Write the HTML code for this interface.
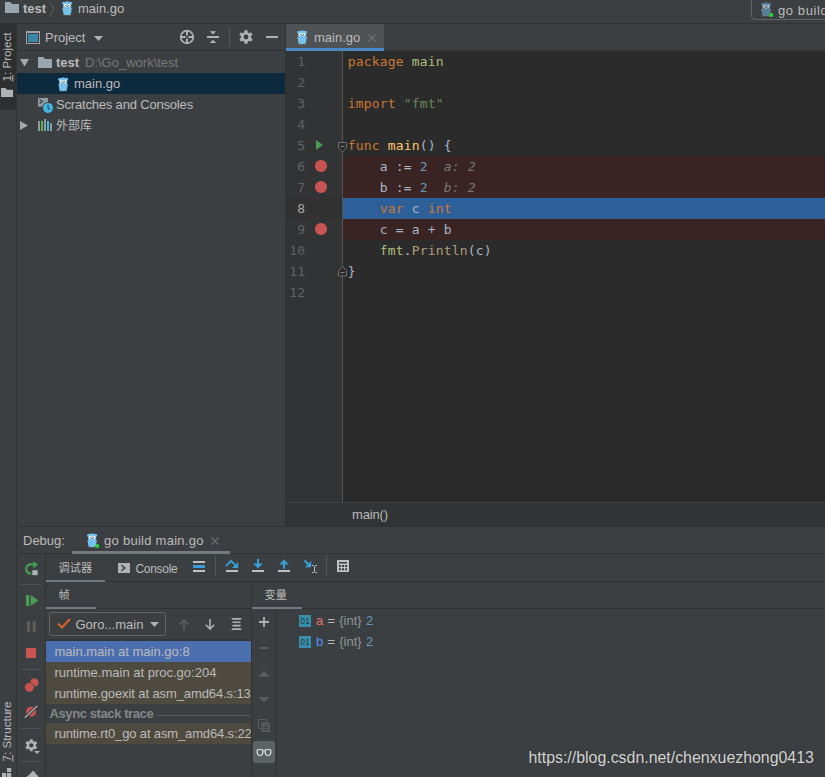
<!DOCTYPE html>
<html lang="zh">
<head>
<meta charset="utf-8">
<title>test - main.go</title>
<style>
*{box-sizing:border-box;margin:0;padding:0}
html,body{width:825px;height:777px;overflow:hidden;background:#3c3f41}
body{position:relative;font-family:"Liberation Sans","Noto Sans CJK SC",sans-serif;font-size:13px;color:#bbbbbb;line-height:1}
.abs{position:absolute}
.t{position:absolute;white-space:nowrap;line-height:16px;height:16px;margin-top:1px}
.v{margin-top:0}
.mono{font-family:"DejaVu Sans Mono","Liberation Mono",monospace;font-size:13px}
svg{position:absolute;overflow:visible}
/* editor */
#editor{left:286px;top:51px;width:539px;height:451px;background:#2b2b2b}
#gutter{left:286px;top:51px;width:56px;height:451px;background:#313335}
#gline{left:342px;top:51px;width:1px;height:451px;background:#555555}
.ln{position:absolute;left:286px;width:19px;text-align:right;color:#606366;height:21px;line-height:21px}
.cl{position:absolute;left:347.7px;letter-spacing:0.1733px;height:21px;line-height:21px;white-space:pre;color:#a9b7c6}
.k{color:#cc7832}.s{color:#6a8759}.n{color:#6897bb}.f{color:#ffc66d}.p{color:#afbf7e}.c{color:#b09d79}.iv{color:#787878;font-style:italic}
.bp{position:absolute;left:315.3px;width:11.4px;height:11.4px;border-radius:50%;background:#c75450;margin-top:0.3px}
.bpl{position:absolute;left:343px;width:482px;height:21px;background:#3a2323}
</style>
</head>
<body>
<!-- ===== top navigation bar ===== -->
<div class="abs" style="left:0;top:0;width:825px;height:23px;background:#3c3f41"></div>
<div class="abs" style="left:0;top:23px;width:825px;height:1px;background:#323232"></div>

<!-- ===== left tool strip ===== -->
<div class="abs" id="lstrip" style="left:0;top:24px;width:16px;height:753px;background:#3c3f41"></div>
<div class="abs" style="left:16px;top:24px;width:1px;height:753px;background:#313335"></div>

<!-- ===== project panel ===== -->
<div class="abs" id="proj" style="left:17px;top:24px;width:268px;height:502px;background:#3c3f41"></div>
<div class="abs" style="left:285px;top:24px;width:1px;height:502px;background:#323232"></div>

<!-- ===== editor ===== -->
<div class="abs" id="tabbar" style="left:286px;top:24px;width:539px;height:27px;background:#3c3f41"></div>
<div class="abs" id="editor"></div>
<div class="abs" id="gutter"></div>
<div class="abs" id="gline"></div>

<!-- breakpoint / exec line backgrounds -->
<div class="bpl" style="top:156px"></div>
<div class="bpl" style="top:177px"></div>
<div class="bpl" style="top:219px"></div>
<div class="abs" style="left:286px;top:198px;width:56px;height:21px;background:#323232"></div>
<div class="abs" style="left:343px;top:198px;width:482px;height:21px;background:#2d6099"></div>
<!-- line numbers -->
<div class="ln mono" style="top:51px">1</div>
<div class="ln mono" style="top:72px">2</div>
<div class="ln mono" style="top:93px">3</div>
<div class="ln mono" style="top:114px">4</div>
<div class="ln mono" style="top:135px">5</div>
<div class="ln mono" style="top:156px">6</div>
<div class="ln mono" style="top:177px">7</div>
<div class="ln mono" style="top:198px;color:#a4a3a3">8</div>
<div class="ln mono" style="top:219px">9</div>
<div class="ln mono" style="top:240px">10</div>
<div class="ln mono" style="top:261px">11</div>
<div class="ln mono" style="top:282px">12</div>
<!-- code -->
<div class="cl mono" style="top:51px"><span class="k">package</span> <span class="p">main</span></div>
<div class="cl mono" style="top:93px"><span class="k">import</span> <span class="s">"fmt"</span></div>
<div class="cl mono" style="top:135px"><span class="k">func</span> <span class="f">main</span>() {</div>
<div class="cl mono" style="top:156px">    a := <span class="n">2</span>  <span class="iv">a: 2</span></div>
<div class="cl mono" style="top:177px">    b := <span class="n">2</span>  <span class="iv">b: 2</span></div>
<div class="cl mono" style="top:198px">    <span class="k">var</span> c <span class="k">int</span></div>
<div class="cl mono" style="top:219px">    c = a + b</div>
<div class="cl mono" style="top:240px">    <span class="p">fmt</span>.<span class="c">Println</span>(c)</div>
<div class="cl mono" style="top:261px">}</div>
<!-- gutter icons -->
<div class="bp" style="top:160px"></div>
<div class="bp" style="top:181px"></div>
<div class="bp" style="top:223px"></div>
<svg style="left:316px;top:140px" width="7" height="10" viewBox="0 0 7 10"><path d="M0 0 L7 5 L0 10 Z" fill="#499c54"/></svg>
<svg style="left:338px;top:142px" width="9" height="11" viewBox="0 0 9 11"><path d="M0.5 0.5 H8.5 V6 L4.5 10 L0.5 6 Z" fill="#2b2b2b" stroke="#6c6f71"/><path d="M2.5 4.5 H6.5" stroke="#7d8082"/></svg>
<svg style="left:338px;top:266px" width="9" height="11" viewBox="0 0 9 11"><path d="M0.5 10 H8.5 V4.5 L4.5 0.5 L0.5 4.5 Z" fill="#2b2b2b" stroke="#6c6f71"/><path d="M2.5 6.5 H6.5" stroke="#7d8082"/></svg>

<!-- top bar content -->
<svg style="left:5px;top:2px" width="14" height="11" viewBox="0 0 14 11"><path d="M0 0 H5.5 L7 2 H14 V11 H0 Z" fill="#9aa7b0"/></svg>
<div class="t" style="left:23px;top:0px;font-weight:bold" id="tb1">test</div>
<svg style="left:49px;top:1px" width="6" height="16" viewBox="0 0 6 16"><path d="M0.5 0.5 L5 8 L0.5 15.5" fill="none" stroke="#5e6062" stroke-width="1"/></svg>
<svg style="left:61.5px;top:0.8px" width="10.3" height="14.5" viewBox="0 0 11 14.5" preserveAspectRatio="none"><circle cx="1.7" cy="2.3" r="1.5" fill="#74c2ec"/><circle cx="9.3" cy="2.3" r="1.5" fill="#74c2ec"/><ellipse cx="0.9" cy="7.9" rx="0.8" ry="0.7" fill="#c9a27c"/><ellipse cx="10.1" cy="7.9" rx="0.8" ry="0.7" fill="#c9a27c"/><ellipse cx="2.3" cy="13.8" rx="0.9" ry="0.6" fill="#c9a27c"/><ellipse cx="8.7" cy="13.8" rx="0.9" ry="0.6" fill="#c9a27c"/><path d="M1.2 5.2 C1.2 1.7 3 0.4 5.5 0.4 C8 0.4 9.8 1.7 9.8 5.2 L10 10.5 C10 13 8.2 14.2 5.5 14.2 C2.8 14.2 1 13 1 10.5 Z" fill="#74c2ec"/><circle cx="3.7" cy="4.2" r="1.55" fill="#ffffff"/><circle cx="7.3" cy="4.2" r="1.55" fill="#ffffff"/><circle cx="4.1" cy="4.3" r="0.6" fill="#30343a"/><circle cx="6.9" cy="4.3" r="0.6" fill="#30343a"/><ellipse cx="5.5" cy="5.7" rx="0.9" ry="0.55" fill="#3a3f45"/><rect x="5" y="6" width="1" height="1" fill="#e9e2d3"/></svg>
<div class="t" style="left:78px;top:0px" id="tb2">main.go</div>
<div class="abs" style="left:751px;top:-4px;width:90px;height:24px;border:1px solid #646464;border-radius:4px"></div>
<svg style="left:761px;top:2px" width="10.3" height="14.5" viewBox="0 0 11 14.5" preserveAspectRatio="none"><circle cx="1.7" cy="2.3" r="1.5" fill="#587f9a"/><circle cx="9.3" cy="2.3" r="1.5" fill="#587f9a"/><ellipse cx="0.9" cy="7.9" rx="0.8" ry="0.7" fill="#c9a27c"/><ellipse cx="10.1" cy="7.9" rx="0.8" ry="0.7" fill="#c9a27c"/><ellipse cx="2.3" cy="13.8" rx="0.9" ry="0.6" fill="#c9a27c"/><ellipse cx="8.7" cy="13.8" rx="0.9" ry="0.6" fill="#c9a27c"/><path d="M1.2 5.2 C1.2 1.7 3 0.4 5.5 0.4 C8 0.4 9.8 1.7 9.8 5.2 L10 10.5 C10 13 8.2 14.2 5.5 14.2 C2.8 14.2 1 13 1 10.5 Z" fill="#587f9a"/><circle cx="3.7" cy="4.2" r="1.55" fill="#c9d4da"/><circle cx="7.3" cy="4.2" r="1.55" fill="#c9d4da"/><circle cx="4.1" cy="4.3" r="0.6" fill="#30343a"/><circle cx="6.9" cy="4.3" r="0.6" fill="#30343a"/><ellipse cx="5.5" cy="5.7" rx="0.9" ry="0.55" fill="#3a3f45"/><rect x="5" y="6" width="1" height="1" fill="#e9e2d3"/><circle cx="11" cy="13" r="2.1" fill="#1fdc2e"/></svg>
<div class="t" style="left:778px;top:2px;letter-spacing:0.6px" id="tb3">go build</div>
<!-- left strip content -->
<div class="abs" style="left:0;top:24px;width:16px;height:86px;background:#2d2f30"></div>
<svg style="left:1px;top:88px" width="12" height="9" viewBox="0 0 12 9"><path d="M0 0 H4.5 L6 1.8 H12 V9 H0 Z" fill="#afb1b3"/></svg>
<div class="t v" id="vt1" style="left:0;top:0;font-size:11.6px;transform-origin:0 0;transform:translate(-0.7px,81.5px) rotate(-90deg)"><u>1</u>: Project</div>
<div class="t v" id="vt2" style="left:0;top:0;font-size:11.6px;transform-origin:0 0;transform:translate(-0.7px,761.5px) rotate(-90deg)"><u>7</u>: Structure</div>
<svg style="left:2px;top:768px" width="10" height="9" viewBox="0 0 10 9"><rect x="5" y="0" width="4.2" height="4" fill="#afb1b3"/><rect x="0" y="5" width="4.2" height="4" fill="#afb1b3"/><rect x="5" y="5" width="4.2" height="4" fill="#afb1b3"/></svg>
<!-- project header -->
<div class="abs" style="left:17px;top:50px;width:268px;height:1px;background:#323232"></div>
<svg style="left:26px;top:31px" width="14" height="13" viewBox="0 0 14 13"><path fill="#9ea3a7" fill-rule="evenodd" d="M0 0 H14 V13 H0 Z M1 2 V12 H13 V2 Z"/><rect x="2" y="3" width="10" height="8" fill="#3a87aa"/></svg>
<div class="t" style="left:45px;top:29px" id="ph1">Project</div>
<svg style="left:93.5px;top:36px" width="9" height="5" viewBox="0 0 9 5"><path d="M0 0 H9 L4.5 5 Z" fill="#afb1b3"/></svg>
<svg style="left:180px;top:30px" width="14" height="14" viewBox="0 0 14 14"><circle cx="7" cy="7" r="6.3" fill="none" stroke="#afb1b3" stroke-width="1.7"/><path d="M7 0.5 V5.6 M7 8.4 V13.5 M0.5 7 H5.6 M8.4 7 H13.5" stroke="#afb1b3" stroke-width="1.9"/></svg>
<svg style="left:207px;top:30px" width="12" height="14" viewBox="0 0 12 14"><path d="M0 6 H12 V8 H0 Z M2.8 1.2 H9.2 L6 4.4 Z M2.8 13 H9.2 L6 9.8 Z" fill="#afb1b3"/></svg>
<div class="abs" style="left:229px;top:27px;width:1px;height:20px;background:#555555"></div>
<svg style="left:238.8px;top:29.9px" width="14" height="14" viewBox="0 0 14 14"><path fill="#afb1b3" fill-rule="evenodd" d="M5.34 2.18 L5.51 0.26 L8.49 0.26 L8.66 2.18 A5.1 5.1 0 0 1 10.35 3.15 L12.09 2.34 L13.58 4.93 L12.01 6.03 A5.1 5.1 0 0 1 12.01 7.97 L13.58 9.07 L12.09 11.66 L10.35 10.85 A5.1 5.1 0 0 1 8.66 11.82 L8.49 13.74 L5.51 13.74 L5.34 11.82 A5.1 5.1 0 0 1 3.65 10.85 L1.91 11.66 L0.42 9.07 L1.99 7.97 A5.1 5.1 0 0 1 1.99 6.03 L0.42 4.93 L1.91 2.34 L3.65 3.15 A5.1 5.1 0 0 1 5.34 2.18 Z M4.60 7.00 A2.4 2.4 0 1 0 9.40 7.00 A2.4 2.4 0 1 0 4.60 7.00 Z"/></svg>
<div class="abs" style="left:266px;top:36px;width:12px;height:2px;background:#afb1b3"></div>
<!-- project tree -->
<div class="abs" style="left:17px;top:73px;width:268px;height:21px;background:#0d293e"></div>
<svg style="left:20.3px;top:58.5px" width="9" height="7.5" viewBox="0 0 9 7.5"><path d="M0 0 H9 L4.5 7.5 Z" fill="#a8a8a8"/></svg>
<svg style="left:38px;top:57px" width="14" height="11" viewBox="0 0 14 11"><path d="M0 0 H5.5 L7 2 H14 V11 H0 Z" fill="#9aa7b0"/></svg>
<div class="t" style="left:56px;top:54px;font-weight:bold" id="tr1">test</div>
<div class="t" style="left:85px;top:54px;color:#787878" id="tr1b">D:\Go_work\test</div>
<svg style="left:57.5px;top:76.5px" width="10.3" height="14.5" viewBox="0 0 11 14.5" preserveAspectRatio="none"><circle cx="1.7" cy="2.3" r="1.5" fill="#74c2ec"/><circle cx="9.3" cy="2.3" r="1.5" fill="#74c2ec"/><ellipse cx="0.9" cy="7.9" rx="0.8" ry="0.7" fill="#c9a27c"/><ellipse cx="10.1" cy="7.9" rx="0.8" ry="0.7" fill="#c9a27c"/><ellipse cx="2.3" cy="13.8" rx="0.9" ry="0.6" fill="#c9a27c"/><ellipse cx="8.7" cy="13.8" rx="0.9" ry="0.6" fill="#c9a27c"/><path d="M1.2 5.2 C1.2 1.7 3 0.4 5.5 0.4 C8 0.4 9.8 1.7 9.8 5.2 L10 10.5 C10 13 8.2 14.2 5.5 14.2 C2.8 14.2 1 13 1 10.5 Z" fill="#74c2ec"/><circle cx="3.7" cy="4.2" r="1.55" fill="#ffffff"/><circle cx="7.3" cy="4.2" r="1.55" fill="#ffffff"/><circle cx="4.1" cy="4.3" r="0.6" fill="#30343a"/><circle cx="6.9" cy="4.3" r="0.6" fill="#30343a"/><ellipse cx="5.5" cy="5.7" rx="0.9" ry="0.55" fill="#3a3f45"/><rect x="5" y="6" width="1" height="1" fill="#e9e2d3"/></svg>
<div class="t" style="left:74px;top:75px" id="tr2">main.go</div>
<svg style="left:38px;top:98px" width="16" height="16" viewBox="0 0 16 16"><rect x="0" y="0" width="10" height="8.6" fill="#909ca4"/><path d="M1.5 1.6 L4.3 3.6 L1.5 5.6" fill="none" stroke="#3c3f41" stroke-width="1.2"/><circle cx="10" cy="9.9" r="5.9" fill="#3c3f41"/><circle cx="10" cy="9.9" r="5" fill="#40b6e0"/><path d="M10 6.8 V10 L11.8 11.6" fill="none" stroke="#2d4b5a" stroke-width="1.2"/></svg>
<div class="t" style="left:56px;top:96px;letter-spacing:-0.18px" id="tr3">Scratches and Consoles</div>
<svg style="left:20px;top:121px" width="8" height="9" viewBox="0 0 8 9"><path d="M0 0 L8 4.5 L0 9 Z" fill="#a8a8a8"/></svg>
<svg style="left:38px;top:119px" width="14" height="12" viewBox="0 0 14 12"><rect x="0" y="2" width="2" height="10" fill="#909ca4"/><rect x="3" y="2" width="2" height="10" fill="#62b543"/><rect x="6" y="0" width="2" height="12" fill="#909ca4"/><rect x="9" y="2" width="2" height="10" fill="#40b6e0"/><rect x="12" y="4" width="2" height="8" fill="#909ca4"/></svg>
<div class="t" style="left:56px;top:117px;font-size:12px" id="tr4">外部库</div>
<!-- editor tab -->
<div class="abs" style="left:286px;top:50px;width:539px;height:1px;background:#323232"></div>
<div class="abs" style="left:286px;top:24px;width:98px;height:26px;background:#4e5254"></div>
<div class="abs" style="left:286px;top:48px;width:98px;height:3px;background:#4a88c7"></div>
<svg style="left:296.5px;top:30px" width="10.3" height="14.5" viewBox="0 0 11 14.5" preserveAspectRatio="none"><circle cx="1.7" cy="2.3" r="1.5" fill="#74c2ec"/><circle cx="9.3" cy="2.3" r="1.5" fill="#74c2ec"/><ellipse cx="0.9" cy="7.9" rx="0.8" ry="0.7" fill="#c9a27c"/><ellipse cx="10.1" cy="7.9" rx="0.8" ry="0.7" fill="#c9a27c"/><ellipse cx="2.3" cy="13.8" rx="0.9" ry="0.6" fill="#c9a27c"/><ellipse cx="8.7" cy="13.8" rx="0.9" ry="0.6" fill="#c9a27c"/><path d="M1.2 5.2 C1.2 1.7 3 0.4 5.5 0.4 C8 0.4 9.8 1.7 9.8 5.2 L10 10.5 C10 13 8.2 14.2 5.5 14.2 C2.8 14.2 1 13 1 10.5 Z" fill="#74c2ec"/><circle cx="3.7" cy="4.2" r="1.55" fill="#ffffff"/><circle cx="7.3" cy="4.2" r="1.55" fill="#ffffff"/><circle cx="4.1" cy="4.3" r="0.6" fill="#30343a"/><circle cx="6.9" cy="4.3" r="0.6" fill="#30343a"/><ellipse cx="5.5" cy="5.7" rx="0.9" ry="0.55" fill="#3a3f45"/><rect x="5" y="6" width="1" height="1" fill="#e9e2d3"/></svg>
<div class="t" style="left:314px;top:29px" id="et1">main.go</div>
<svg style="left:368px;top:33.5px" width="8" height="8" viewBox="0 0 8 8"><path d="M0.5 0.5 L7.5 7.5 M7.5 0.5 L0.5 7.5" stroke="#6e7173" stroke-width="1.1"/></svg>

<!-- ===== breadcrumb ===== -->
<div class="abs" id="crumb" style="left:286px;top:502px;width:539px;height:24px;background:#313335"></div>

<!-- ===== debug panel ===== -->
<div class="abs" id="debug" style="left:17px;top:527px;width:808px;height:250px;background:#3c3f41"></div>
<div class="abs" style="left:17px;top:526px;width:808px;height:1px;background:#323232"></div>

<!-- breadcrumb text -->
<div class="abs" style="left:286px;top:502px;width:539px;height:1px;background:#404244"></div>
<div class="t" style="left:352px;top:506px;letter-spacing:-0.15px" id="bc1">main()</div>
<!-- debug header -->
<div class="t" style="left:23px;top:532px" id="dh1">Debug:</div>
<svg style="left:86.7px;top:533px" width="10.3" height="14.5" viewBox="0 0 11 14.5" preserveAspectRatio="none"><circle cx="1.7" cy="2.3" r="1.5" fill="#74c2ec"/><circle cx="9.3" cy="2.3" r="1.5" fill="#74c2ec"/><ellipse cx="0.9" cy="7.9" rx="0.8" ry="0.7" fill="#c9a27c"/><ellipse cx="10.1" cy="7.9" rx="0.8" ry="0.7" fill="#c9a27c"/><ellipse cx="2.3" cy="13.8" rx="0.9" ry="0.6" fill="#c9a27c"/><ellipse cx="8.7" cy="13.8" rx="0.9" ry="0.6" fill="#c9a27c"/><path d="M1.2 5.2 C1.2 1.7 3 0.4 5.5 0.4 C8 0.4 9.8 1.7 9.8 5.2 L10 10.5 C10 13 8.2 14.2 5.5 14.2 C2.8 14.2 1 13 1 10.5 Z" fill="#74c2ec"/><circle cx="3.7" cy="4.2" r="1.55" fill="#ffffff"/><circle cx="7.3" cy="4.2" r="1.55" fill="#ffffff"/><circle cx="4.1" cy="4.3" r="0.6" fill="#30343a"/><circle cx="6.9" cy="4.3" r="0.6" fill="#30343a"/><ellipse cx="5.5" cy="5.7" rx="0.9" ry="0.55" fill="#3a3f45"/><rect x="5" y="6" width="1" height="1" fill="#e9e2d3"/><circle cx="11" cy="13" r="2.1" fill="#1fdc2e"/></svg>
<div class="t" style="left:104px;top:532px;letter-spacing:0.27px" id="dh2">go build main.go</div>
<svg style="left:211.3px;top:537px" width="8" height="8" viewBox="0 0 8 8"><path d="M0.5 0.5 L7.5 7.5 M7.5 0.5 L0.5 7.5" stroke="#6e7173" stroke-width="1.1"/></svg>
<div class="abs" style="left:72px;top:551px;width:158px;height:3px;background:#747a80"></div>
<div class="abs" style="left:17px;top:553px;width:808px;height:1px;background:#323232"></div>
<div class="abs" style="left:72px;top:551px;width:158px;height:3px;background:#747a80"></div>
<!-- debug left toolbar -->
<div class="abs" style="left:45px;top:554px;width:1px;height:223px;background:#323232"></div>
<svg style="left:25px;top:561px" width="14" height="15" viewBox="0 0 14 15"><path d="M6.2 12.6 A4.6 4.6 0 1 1 6.6 3.5 H9" fill="none" stroke="#499c54" stroke-width="2.2"/><path d="M8.2 0 L13.2 3.6 L8.2 7.4 Z" fill="#499c54"/><rect x="7.3" y="9.2" width="5.4" height="5" fill="#afb1b3"/></svg>
<div class="abs" style="left:21px;top:584px;width:20px;height:1px;background:#515456"></div>
<div class="abs" style="left:21px;top:669px;width:20px;height:1px;background:#515456"></div>
<div class="abs" style="left:21px;top:728px;width:20px;height:1px;background:#515456"></div>
<div class="abs" style="left:21px;top:761px;width:20px;height:1px;background:#515456"></div>
<svg style="left:26px;top:595px" width="13" height="11" viewBox="0 0 13 11"><rect x="0" y="0" width="3.3" height="11" fill="#499c54"/><path d="M4.7 0 L12.4 5.5 L4.7 11 Z" fill="#499c54"/></svg>
<svg style="left:26.5px;top:621px" width="9" height="11" viewBox="0 0 9 11"><rect x="0" y="0" width="3.1" height="11" fill="#5e5b59"/><rect x="5.7" y="0" width="3.1" height="11" fill="#5e5b59"/></svg>
<div class="abs" style="left:26px;top:648px;width:10px;height:10px;background:#c75450"></div>
<svg style="left:24px;top:678px" width="15" height="15" viewBox="0 0 15 15"><circle cx="10.3" cy="4.6" r="4.1" fill="#c75450"/><circle cx="5.3" cy="9.4" r="5" fill="#3c3f41"/><circle cx="5.3" cy="9.4" r="4.4" fill="#c75450"/></svg>
<svg style="left:24px;top:705px" width="15" height="14" viewBox="0 0 15 14"><circle cx="7.1" cy="6.8" r="5" fill="#c75450"/><path d="M0.6 13 L13.4 0.8" stroke="#3c3f41" stroke-width="3.2"/><path d="M0.8 12.8 L13.2 1" stroke="#afb1b3" stroke-width="1.2"/></svg>
<svg style="left:24.5px;top:738.5px" width="12.6" height="12.6" viewBox="0 0 14 14"><path fill="#afb1b3" fill-rule="evenodd" d="M5.34 2.18 L5.51 0.26 L8.49 0.26 L8.66 2.18 A5.1 5.1 0 0 1 10.35 3.15 L12.09 2.34 L13.58 4.93 L12.01 6.03 A5.1 5.1 0 0 1 12.01 7.97 L13.58 9.07 L12.09 11.66 L10.35 10.85 A5.1 5.1 0 0 1 8.66 11.82 L8.49 13.74 L5.51 13.74 L5.34 11.82 A5.1 5.1 0 0 1 3.65 10.85 L1.91 11.66 L0.42 9.07 L1.99 7.97 A5.1 5.1 0 0 1 1.99 6.03 L0.42 4.93 L1.91 2.34 L3.65 3.15 A5.1 5.1 0 0 1 5.34 2.18 Z M4.60 7.00 A2.4 2.4 0 1 0 9.40 7.00 A2.4 2.4 0 1 0 4.60 7.00 Z"/></svg>
<svg style="left:34px;top:751px" width="6" height="3" viewBox="0 0 6 3"><path d="M0 0 H6 L3 3 Z" fill="#afb1b3"/></svg>
<svg style="left:26px;top:770px" width="13" height="7" viewBox="0 0 13 7"><path d="M0.3 7 L3.5 4.6 L7.1 0.6 L12.4 6.4 L12 7 Z" fill="#afb1b3"/></svg>
<!-- debug tabs/toolbar row -->
<div class="abs" style="left:46px;top:581px;width:779px;height:1px;background:#323232"></div>
<div class="t" style="left:58.5px;top:559px;font-size:11.2px" id="dt1">调试器</div>
<div class="abs" style="left:46px;top:580px;width:59px;height:2px;background:#747a80"></div>
<svg style="left:118px;top:563px" width="12" height="10" viewBox="0 0 12 10"><rect width="12" height="10" fill="#afb1b3"/><path d="M3.5 2.2 L6.8 5 L3.5 7.8" fill="none" stroke="#3c3f41" stroke-width="1.5"/></svg>
<div class="t" style="left:135.5px;top:559.5px;font-size:12px;letter-spacing:-0.3px" id="dt2">Console</div>
<svg style="left:193px;top:561px" width="12" height="11" viewBox="0 0 12 11"><rect x="0" y="0" width="12" height="2" fill="#bdbfc1"/><rect x="0" y="4" width="12" height="3" fill="#389fd6"/><rect x="0" y="9" width="12" height="2" fill="#bdbfc1"/></svg>
<div class="abs" style="left:215px;top:556px;width:1px;height:20px;background:#555555"></div>
<svg style="left:225px;top:559px" width="14" height="14" viewBox="0 0 14 14"><path d="M1 7.2 L6 1.8 L10.2 6.2" fill="none" stroke="#389fd6" stroke-width="1.8"/><path d="M13.2 2.8 V9 H7 Z" fill="#389fd6"/><rect x="1" y="11" width="12" height="2" fill="#bdbfc1"/></svg>
<svg style="left:251px;top:559px" width="14" height="14" viewBox="0 0 14 14"><path d="M7 0 V6" stroke="#389fd6" stroke-width="2"/><path d="M2.3 4.6 H11.7 L7 9.5 Z" fill="#389fd6"/><rect x="1" y="11" width="12" height="2" fill="#bdbfc1"/></svg>
<svg style="left:277px;top:559px" width="14" height="14" viewBox="0 0 14 14"><path d="M7 9.7 V4" stroke="#389fd6" stroke-width="2"/><path d="M2.3 5.4 H11.7 L7 0.5 Z" fill="#389fd6"/><rect x="1" y="11" width="12" height="2" fill="#bdbfc1"/></svg>
<svg style="left:303px;top:559px" width="15" height="16" viewBox="0 0 15 16"><path d="M1.5 1.5 L6.5 6.5" stroke="#389fd6" stroke-width="2"/><path d="M8.2 2 V8.2 H2 Z" fill="#389fd6"/><path d="M9 6.5 H10.8 M12.2 6.5 H14 M11.5 7 V13 M9 13.5 H10.8 M12.2 13.5 H14" stroke="#bdbfc1" stroke-width="1"/></svg>
<div class="abs" style="left:326px;top:556px;width:1px;height:20px;background:#555555"></div>
<svg style="left:337px;top:560px" width="12" height="12" viewBox="0 0 12 12"><path fill="#bdbfc1" fill-rule="evenodd" d="M0 0 H12 V12 H0 Z M2 2 V3.6 H10 V2 Z M2 5 V7 H4 V5 Z M5 5 V7 H7 V5 Z M8 5 V7 H10 V5 Z M2 8.2 V10.2 H4 V8.2 Z M5 8.2 V10.2 H7 V8.2 Z M8 8.2 V10.2 H10 V8.2 Z"/></svg>
<!-- frames / variables headers -->
<div class="abs" style="left:46px;top:608px;width:779px;height:1px;background:#323232"></div>
<div class="abs" style="left:251px;top:582px;width:1px;height:195px;background:#323232"></div>
<div class="abs" style="left:276px;top:609px;width:1px;height:168px;background:#323232"></div>
<div class="t" style="left:58.5px;top:586px;font-size:11.2px" id="fh1">帧</div>
<div class="abs" style="left:46px;top:607px;width:50px;height:2px;background:#747a80"></div>
<div class="t" style="left:264.5px;top:586px;font-size:11.2px" id="vh1">变量</div>
<div class="abs" style="left:252px;top:607px;width:50px;height:2px;background:#747a80"></div>
<!-- frames toolbar -->
<div class="abs" style="left:49px;top:612px;width:117px;height:24px;border:1px solid #646464;border-radius:3px"></div>
<svg style="left:57px;top:618px" width="14" height="11" viewBox="0 0 14 11"><path d="M1 5.5 L5 9.5 L13 1" fill="none" stroke="#d2622f" stroke-width="2.2"/></svg>
<div class="t" style="left:75.5px;top:616px" id="cb1">Goro...main</div>
<svg style="left:150px;top:621.5px" width="9" height="5" viewBox="0 0 9 5"><path d="M0 0 H9 L4.5 5 Z" fill="#afb1b3"/></svg>
<svg style="left:179px;top:618.5px" width="10" height="11" viewBox="0 0 10 11"><path d="M5 11 V1.5 M0.8 5.3 L5 1 L9.2 5.3" fill="none" stroke="#5f6264" stroke-width="1.6"/></svg>
<svg style="left:205px;top:618.5px" width="10" height="11" viewBox="0 0 10 11"><path d="M5 0 V9.5 M0.8 5.7 L5 10 L9.2 5.7" fill="none" stroke="#afb1b3" stroke-width="1.6"/></svg>
<svg style="left:230.5px;top:617.5px" width="11" height="12" viewBox="0 0 11 12"><path d="M0 0 H11 L9.5 1.8 H1.5 Z M1.5 3.4 H9.5 V5 H1.5 Z M1.5 6.8 H9.5 V8.4 H1.5 Z M1.5 10.2 H9.5 L11 12 H0 Z" fill="#afb1b3"/></svg>
<!-- frames list -->
<div class="abs" style="left:46px;top:639px;width:205px;height:2px;background:#333537"></div>
<div class="abs" style="left:46px;top:641px;width:205px;height:21px;background:#4b6eaf"></div>
<div class="abs" style="left:46px;top:662px;width:205px;height:42px;background:#4e4a40"></div>
<div class="abs" style="left:46px;top:723px;width:205px;height:21px;background:#4e4a40"></div>
<div class="abs" style="left:46px;top:641px;width:205px;height:104px;overflow:hidden" id="flist">
<div class="t" style="left:8.5px;top:2px" id="fr1">main.main at main.go:8</div>
<div class="t" style="left:8.5px;top:23px" id="fr2">runtime.main at proc.go:204</div>
<div class="t" style="left:8.5px;top:44px;letter-spacing:-0.10px" id="fr3">runtime.goexit at asm_amd64.s:13</div>
<div class="t" style="left:3.5px;top:64px;font-weight:bold;color:#858789;letter-spacing:-0.4px" id="fr4">Async stack trace</div>
<div class="abs" style="left:111px;top:74px;width:94px;height:1px;background:#5a5d5f"></div>
<div class="t" style="left:8.5px;top:84px;letter-spacing:-0.14px" id="fr5">runtime.rt0_go at asm_amd64.s:22</div>
</div>
<!-- variables toolbar -->
<svg style="left:259px;top:617px" width="10" height="10" viewBox="0 0 10 10"><path d="M5 0 V10 M0 5 H10" stroke="#afb1b3" stroke-width="1.8"/></svg>
<div class="abs" style="left:259px;top:647px;width:10px;height:2px;background:#5a5d5f"></div>
<svg style="left:258px;top:671.3px" width="12" height="5.8" viewBox="0 0 12 6"><path d="M0 6 H12 L6 0 Z" fill="#5a5d5f"/></svg>
<svg style="left:258px;top:696.8px" width="12" height="5.8" viewBox="0 0 12 6"><path d="M0 0 H12 L6 6 Z" fill="#5a5d5f"/></svg>
<svg style="left:258px;top:719px" width="12" height="13" viewBox="0 0 12 13"><path d="M0.5 0.5 H8.5 V3 M0.5 0.5 V9.5 H3" fill="none" stroke="#5a5d5f"/><rect x="3.5" y="3.5" width="8.5" height="9.5" fill="#5a5d5f"/><path d="M5.5 6.5 H10.5 M5.5 8.5 H10.5 M5.5 10.5 H10.5" stroke="#3c3f41" stroke-width="1"/></svg>
<div class="abs" style="left:253px;top:741px;width:22px;height:22px;background:#5c6164;border-radius:3px"></div>
<svg style="left:256px;top:748px" width="16" height="9" viewBox="0 0 16 9"><path d="M1.2 2.2 Q4 0.6 6.8 2.2 Q7.2 7.6 4 7.6 Q0.8 7.6 1.2 2.2 Z M9.2 2.2 Q12 0.6 14.8 2.2 Q15.2 7.6 12 7.6 Q8.8 7.6 9.2 2.2 Z" fill="none" stroke="#cfd1d3" stroke-width="1.4"/><path d="M6.8 3 Q8 2.2 9.2 3" fill="none" stroke="#cfd1d3" stroke-width="1.3"/></svg>
<!-- variables list -->
<svg style="left:299px;top:615px" width="12" height="12" viewBox="0 0 12 12"><rect width="12" height="12" fill="#3b8ea9"/><text x="6" y="9.1" style="font-family:'Liberation Sans',sans-serif;font-size:8.4px" fill="#1f3c47" text-anchor="middle">01</text></svg>
<div class="t" style="left:316px;top:612px;word-spacing:0.6px" id="var0"><span style="color:#e8746f">a</span> = <span style="color:#8f9496">{int}</span> <span style="color:#6897bb">2</span></div>
<svg style="left:299px;top:636px" width="12" height="12" viewBox="0 0 12 12"><rect width="12" height="12" fill="#3b8ea9"/><text x="6" y="9.1" style="font-family:'Liberation Sans',sans-serif;font-size:8.4px" fill="#1f3c47" text-anchor="middle">01</text></svg>
<div class="t" style="left:316px;top:633px;word-spacing:0.6px" id="var1"><span style="color:#5394ec">b</span> = <span style="color:#8f9496">{int}</span> <span style="color:#6897bb">2</span></div>

<!-- watermark -->
<div class="t" id="wm" style="left:528.5px;top:747.5px;font-size:15.9px;line-height:18px;height:18px;color:#d4d4d4;text-shadow:0 0 1px #2b2b2b">https://blog.csdn.net/chenxuezhong0413</div>
</body>
</html>
